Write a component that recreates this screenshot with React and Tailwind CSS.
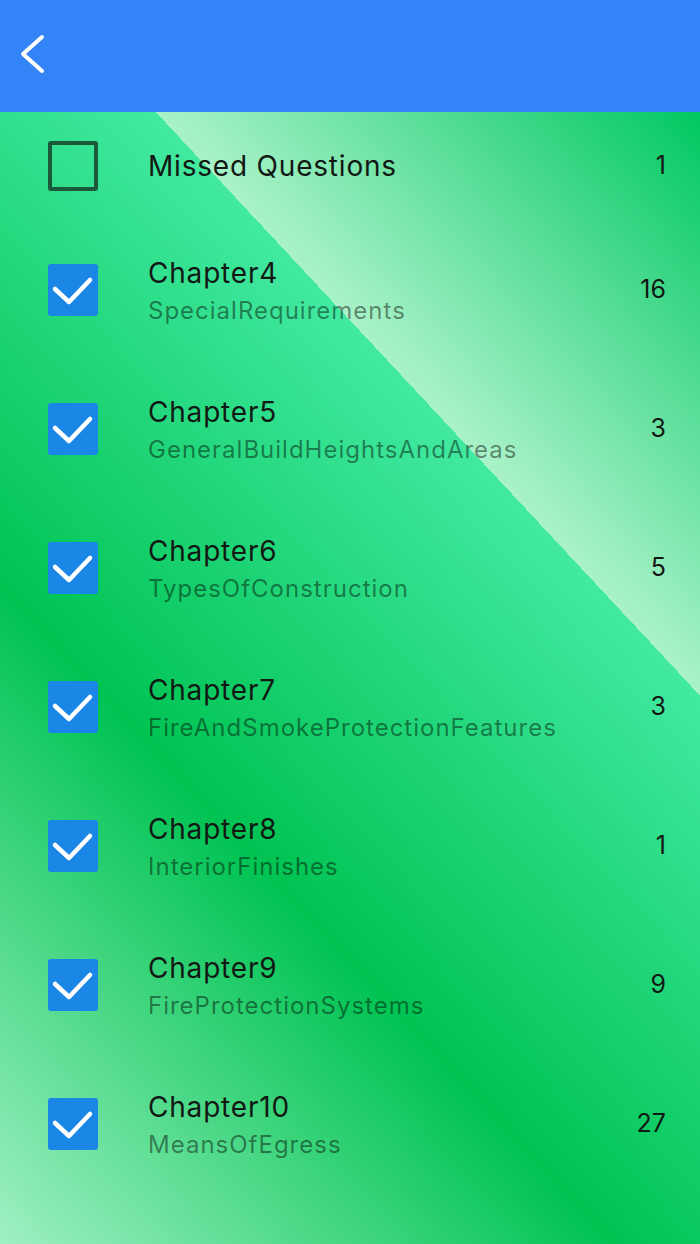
const chapters = [
  { title: 'Chapter4', subtitle: 'SpecialRequirements', count: 16 },
  { title: 'Chapter5', subtitle: 'GeneralBuildHeightsAndAreas', count: 3 },
  { title: 'Chapter6', subtitle: 'TypesOfConstruction', count: 5 },
  { title: 'Chapter7', subtitle: 'FireAndSmokeProtectionFeatures', count: 3 },
  { title: 'Chapter8', subtitle: 'InteriorFinishes', count: 1 },
  { title: 'Chapter9', subtitle: 'FireProtectionSystems', count: 9 },
  { title: 'Chapter10', subtitle: 'MeansOfEgress', count: 27 },
];

const CheckedBox = () => (
  <div className="w-[50px] h-[52px] bg-[#1a86e6] rounded-[3px] shrink-0 flex items-center justify-center">
    <svg width="50" height="52" viewBox="0 0 50 52" fill="none">
      <polyline
        points="7,25 21,38 42,16"
        stroke="white"
        strokeWidth="4.5"
        strokeLinecap="round"
        strokeLinejoin="round"
      />
    </svg>
  </div>
);

const EmptyBox = () => (
  <div className="w-[50px] h-[50px] border-[4px] border-[#1a5a3b] rounded-[3px] shrink-0" />
);

const App = () => {
  return (
    <div className="min-h-screen flex flex-col font-['Inter',sans-serif]">
      <header className="h-[112px] bg-[#3384f7] flex items-center pl-[19px] shrink-0">
        <svg width="32" height="44" viewBox="0 0 32 44" fill="none" className="-mt-[4px]">
          <polyline
            points="23,5 4,22 23,39"
            stroke="white"
            strokeWidth="4"
            strokeLinecap="round"
            strokeLinejoin="round"
          />
        </svg>
      </header>

      <main className="flex-1 bg-[linear-gradient(227deg,#00c862_0%,#aaf2c9_31%,#42e9a1_31%,#00c352_65%,#9ff0c2_100%)]">
        <div className="h-[108px] flex items-center pl-[48px] pr-[34px]">
          <EmptyBox />
          <span className="ml-[50px] flex-1 text-[28px] tracking-[0.8px] text-[#121814]">Missed Questions</span>
          <span className="text-[25px] text-[#121814]">1</span>
        </div>

        {chapters.map((c) => (
          <div key={c.title} className="h-[139px] flex items-center pl-[48px] pr-[34px]">
            <CheckedBox />
            <div className="ml-[50px] mt-[4px] flex-1 flex flex-col">
              <span className="text-[28px] leading-[38px] tracking-[0.8px] text-[#121814]">{c.title}</span>
              <span className="text-[24px] leading-[38px] tracking-[1px] text-black/45">{c.subtitle}</span>
            </div>
            <span className="text-[25px] text-[#121814]">{c.count}</span>
          </div>
        ))}
      </main>
    </div>
  );
};

export default App;
